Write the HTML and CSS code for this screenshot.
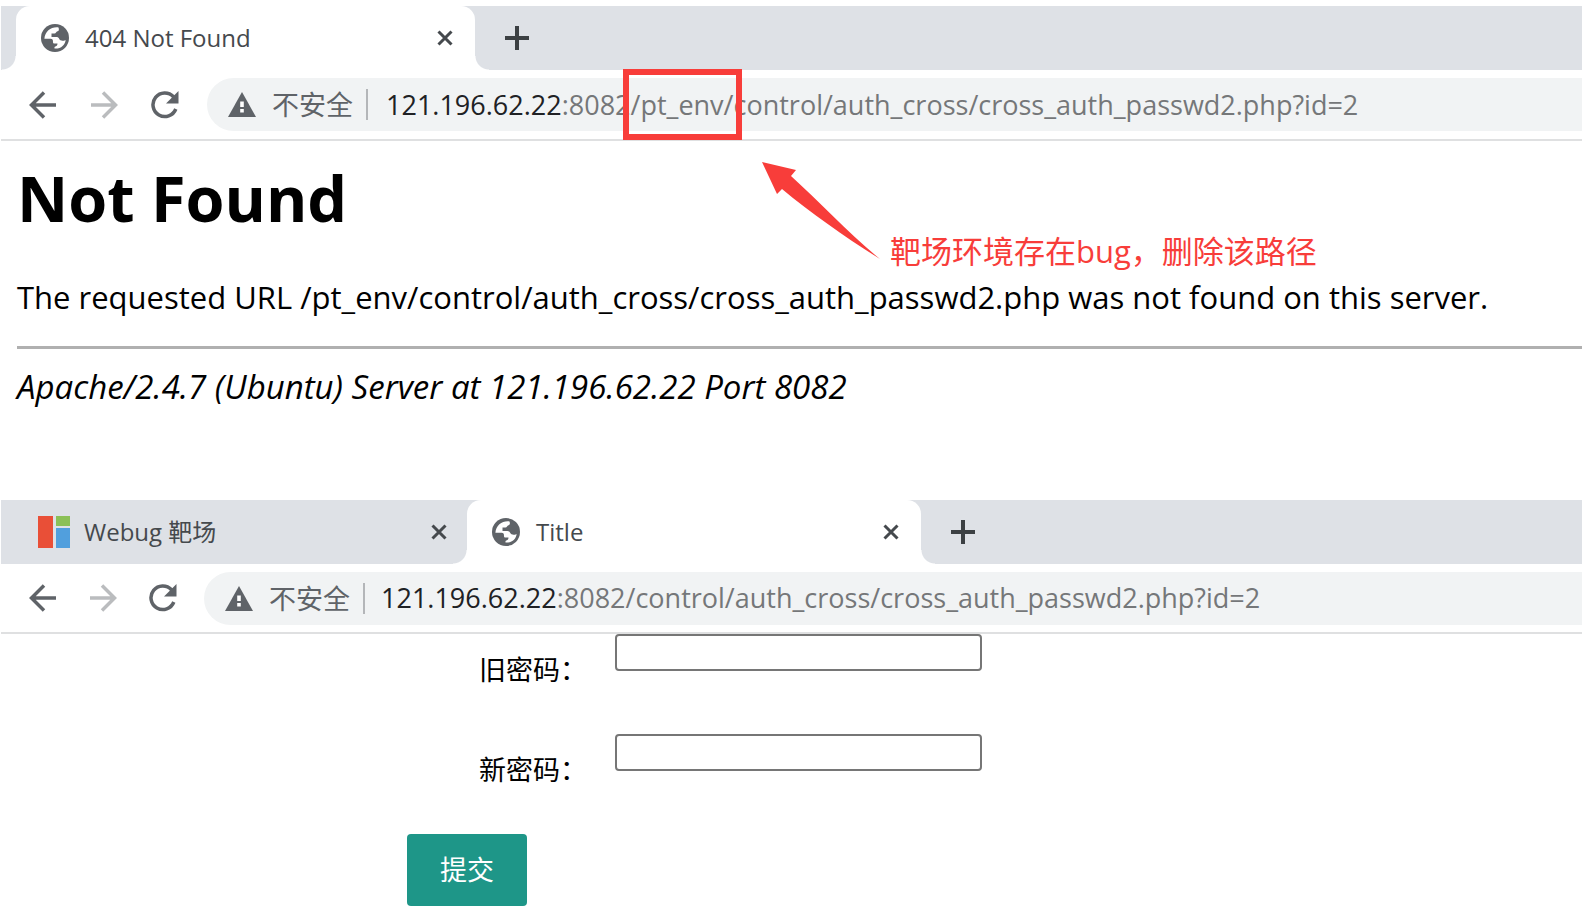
FILE: index.html
```html
<!DOCTYPE html>
<html lang="zh-CN">
<head>
<meta charset="utf-8">
<title>404 Not Found</title>
<link rel="stylesheet" href="styles.css">
</head>
<body>
<svg class="sprite" aria-hidden="true">
  <symbol id="globe" viewBox="0 0 28 28">
    <circle cx="14" cy="14" r="14" fill="#5f6368"/>
    <path d="M17.500 3.400C10.500 2.500 4 7 3.400 14.800H9.500c2 0 2.500 1 2.500 3.400 0 .9.500 1.300 1.500 1.300H16.500c0 2-1 2.600-3 3.500v1.500c6 .6 10.800-3.500 11.100-8.600-2 1-3.600 1.100-5.100.4-1.500-.8-1.500-3.300-4-3.300h-5V9.500h3c1.500 0 1.500-1.800 3-2.200 1.300-.4 1.800-1.600 1-3.900z" fill="#fff"/>
  </symbol>
  <symbol id="close" viewBox="0 0 16 16"><path d="M1.500 1.500l13 13m0-13l-13 13" stroke="#45494d" stroke-width="3"/></symbol>
  <symbol id="plus" viewBox="0 0 24 24"><path d="M12 0v24M0 12h24" stroke="#3c4043" stroke-width="4"/></symbol>
  <symbol id="back" viewBox="0 0 28 28"><path d="M27 14H3M15 1.500L2.500 14 15 26.500" fill="none" stroke="currentColor" stroke-width="3.500"/></symbol>
  <symbol id="forward" viewBox="0 0 28 28"><path d="M1 14h24M13 1.500L25.500 14 13 26.500" fill="none" stroke="currentColor" stroke-width="3.500"/></symbol>
  <symbol id="reload" viewBox="0 0 28 28"><path d="M24.800 18A11.800 11.800 0 1 1 22.500 5.800L24 7.500" fill="none" stroke="currentColor" stroke-width="3.500"/><path d="M27.500 0v12.500H15z" fill="currentColor"/></symbol>
  <symbol id="warn" viewBox="0 0 28 25"><path d="M14 0l14 25H0z" fill="#5f6368"/><path d="M12.200 9.500h3.600v5.500h-3.600zM12.200 17h3.600v3.500h-3.600z" fill="#fff"/></symbol>
</svg>

<section class="window window-first">
  <div class="tabs">
    <div class="tab active">
      <svg class="globe"><use href="#globe"/></svg>
      <span class="tab-title">404 Not Found</span>
      <button class="icon-btn" aria-label="关闭"><svg class="close"><use href="#close"/></svg></button>
    </div>
    <button class="icon-btn new-tab" aria-label="新标签页"><svg class="plus"><use href="#plus"/></svg></button>
  </div>
  <div class="toolbar">
    <button class="icon-btn" aria-label="后退"><svg class="nav"><use href="#back"/></svg></button>
    <button class="icon-btn dim" aria-label="前进"><svg class="nav"><use href="#forward"/></svg></button>
    <button class="icon-btn" aria-label="刷新"><svg class="nav"><use href="#reload"/></svg></button>
    <div class="omnibox">
      <svg class="warn"><use href="#warn"/></svg>
      <span class="insecure">不安全</span>
      <span class="url"><b>121.196.62.22</b>:8082<span class="marked">/pt_env/</span>control/auth_cross/cross_auth_passwd2.php?id=2</span>
    </div>
  </div>
  <main class="error-page">
    <h1>Not Found</h1>
    <p>The requested URL /pt_env/control/auth_cross/cross_auth_passwd2.php was not found on this server.</p>
    <hr>
    <address>Apache/2.4.7 (Ubuntu) Server at 121.196.62.22 Port 8082</address>
    <div class="note">
      <svg class="arrow" viewBox="0 0 120 98"><path d="M0 0l34 8-5 6c30 27 58 58 89 83C86 77 50 52 20 27l-5 5z" fill="#f83d3a"/></svg>
      <span>靶场环境存在bug，删除该路径</span>
    </div>
  </main>
</section>

<section class="window window-second">
  <div class="tabs">
    <div class="tab">
      <svg class="logo" viewBox="0 0 32 32"><path d="M0 0h15v32H0z" fill="#e94f37"/><path d="M18 0h14v10H18z" fill="#8bc057"/><path d="M18 12h14v20H18z" fill="#519fdd"/></svg>
      <span class="tab-title">Webug 靶场</span>
      <button class="icon-btn" aria-label="关闭"><svg class="close"><use href="#close"/></svg></button>
    </div>
    <div class="tab active">
      <svg class="globe"><use href="#globe"/></svg>
      <span class="tab-title">Title</span>
      <button class="icon-btn" aria-label="关闭"><svg class="close"><use href="#close"/></svg></button>
    </div>
    <button class="icon-btn new-tab" aria-label="新标签页"><svg class="plus"><use href="#plus"/></svg></button>
  </div>
  <div class="toolbar">
    <button class="icon-btn" aria-label="后退"><svg class="nav"><use href="#back"/></svg></button>
    <button class="icon-btn dim" aria-label="前进"><svg class="nav"><use href="#forward"/></svg></button>
    <button class="icon-btn" aria-label="刷新"><svg class="nav"><use href="#reload"/></svg></button>
    <div class="omnibox">
      <svg class="warn"><use href="#warn"/></svg>
      <span class="insecure">不安全</span>
      <span class="url"><b>121.196.62.22</b>:8082/control/auth_cross/cross_auth_passwd2.php?id=2</span>
    </div>
  </div>
  <form class="password-form">
    <div class="field"><label for="old">旧密码：</label><input id="old" type="password"></div>
    <div class="field"><label for="new">新密码：</label><input id="new" type="password"></div>
    <button class="submit" type="button">提交</button>
  </form>
</section>
</body>
</html>
```

FILE: styles.css
```css
* { box-sizing: border-box; }
body {
  margin: 0;
  padding: 6px 0 0 1px;
  background: #fff;
  color: #000;
  font-family: "Open Sans", "Noto Sans CJK SC", sans-serif;
  overflow-x: hidden;
}
svg { display: block; flex: none; }
.sprite { position: absolute; width: 0; height: 0; }
.icon-btn { border: 0; padding: 0; background: none; color: #5f6368; }
.icon-btn.dim { color: #babcbe; }

.tabs { display: flex; height: 64px; background: #dee1e6; }
.tab { display: flex; align-items: center; width: 454px; padding: 0 22px 0 25px; }
.tab-title { flex: 1; margin-left: 16px; font-size: 24px; line-height: 32px; color: #45494d; white-space: nowrap; }
.active { position: relative; background: #fff; border-radius: 14px 14px 0 0; }
.active::before, .active::after {
  content: "";
  position: absolute;
  bottom: 0;
  width: 14px;
  height: 14px;
}
.active::before { right: 100%; background: radial-gradient(circle at 0 0, #dee1e6 13px, #fff 14px); }
.active::after { left: 100%; background: radial-gradient(circle at 100% 0, #dee1e6 13px, #fff 14px); }
.new-tab { margin-left: 30px; }
.globe { width: 28px; height: 28px; }
.close { width: 16px; height: 16px; }
.plus { width: 24px; height: 24px; }
.logo { width: 32px; height: 32px; }
.window-first .tab { width: 459px; margin-left: 15px; }
.window-second .tab:first-child { width: 466px; padding: 0 20px 0 37px; }
.window-second .tab:first-child .tab-title { margin-left: 14px; }

.toolbar { display: flex; align-items: center; height: 71px; padding-left: 28px; gap: 33px; border-bottom: 2px solid #dfe0e1; }
.nav { width: 28px; height: 28px; }
.omnibox {
  display: flex;
  align-items: center;
  flex: 1;
  height: 53px;
  margin-left: -5px;
  padding-left: 21px;
  background: #f1f3f4;
  border-radius: 27px 0 0 27px;
}
.warn { width: 28px; height: 25px; }
.insecure { margin-left: 16px; padding-right: 13px; border-right: 2px solid #b4b6b9; font-size: 27px; line-height: 31px; color: #5f6368; }
.url { margin-left: 18px; font-size: 27px; line-height: 38px; color: #757779; white-space: nowrap; }
.url b { font-weight: 400; color: #202124; }
.marked { position: relative; }
.marked::after { content: ""; position: absolute; inset: -17px -8px; border: 6px solid #f83d3a; }

.error-page { position: relative; height: 359px; padding: 13px 0 0 16px; }
h1 { margin: 0; font-size: 63px; line-height: 88px; }
p { margin: 33px 0 0; font-size: 31px; line-height: 44px; white-space: nowrap; }
hr { margin: 27px 0 0; border: 0; border-top: 3px solid #b0b0b0; }
address { margin-top: 16px; font-size: 33px; line-height: 44px; }
.note { position: absolute; left: 761px; top: 21px; display: flex; align-items: flex-end; gap: 8px; color: #f83d3a; font-size: 31px; line-height: 18px; white-space: nowrap; }
.arrow { width: 120px; height: 98px; }

.window-second .toolbar { height: 70px; gap: 32px; }
.window-second .url { margin-left: 16px; }
.password-form { display: flex; flex-direction: column; align-items: flex-start; padding-left: 406px; }
.field { display: flex; height: 100px; }
.field label { width: 208px; padding: 18px 28px 0 0; text-align: right; font-size: 27px; line-height: 36px; }
.field input { width: 367px; height: 37px; border: 2px solid #767676; border-radius: 4px; background: #fff; }
.submit { padding: 18px 33px; border: 0; border-radius: 4px; background: #1e9688; color: #fff; font-family: inherit; font-size: 27px; line-height: 36px; }
```
